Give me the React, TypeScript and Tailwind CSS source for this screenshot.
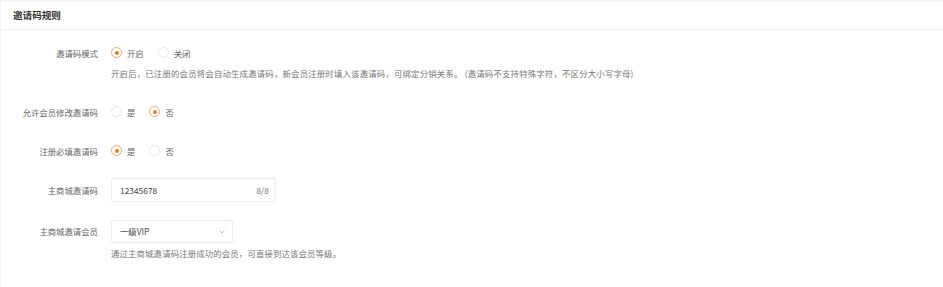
import React from 'react';

// ── Radio option ──
const Radio = ({ label, checked }: { label: string; checked?: boolean }) => (
  <div className="flex items-center gap-[5px]">
    <span
      className={`flex h-[11px] w-[11px] items-center justify-center rounded-full border ${
        checked ? 'border-[#e8ac74]' : 'border-[#e8e8e8]'
      }`}
    >
      {checked && <span className="h-[4px] w-[4px] rounded-full bg-[#d9822f]" />}
    </span>
    <span className="text-[#666]">{label}</span>
  </div>
);

const RadioGroup = ({ options, value }: { options: string[]; value: string }) => (
  <div className="flex h-[20px] items-center gap-[14px]">
    {options.map((o) => (
      <Radio key={o} label={o} checked={o === value} />
    ))}
  </div>
);

// ── Form row ──
const Row = ({
  label,
  height,
  className,
  children,
}: {
  label: string;
  height: string;
  className?: string;
  children: React.ReactNode;
}) => (
  <div className={`flex items-start ${className || ''}`}>
    <div className={`w-[97px] shrink-0 text-right text-[#666] ${height}`}>{label}</div>
    <div className="ml-[13px]">{children}</div>
  </div>
);

export default function App() {
  return (
    <div
      className="h-[287px] w-[943px] bg-white text-[8.4px] border-t-2 border-[#f2f3f7]"
      style={{ fontFamily: '"Noto Sans CJK SC", "Noto Sans", sans-serif' }}
    >
      <div className="h-[285px] border-l border-[#f3f3f3]">
        {/* ── Header ── */}
        <div className="flex h-[28px] items-center border-b border-[#f3f3f3] pl-[12px]">
          <h3 className="text-[9.6px] font-semibold text-[#333]">邀请码规则</h3>
        </div>

        {/* ── Form ── */}
        <div className="pt-[13px]">
          <Row label="邀请码模式" height="leading-[20px]">
            <RadioGroup options={['开启', '关闭']} value="开启" />
            <p className="whitespace-pre leading-[20px] tracking-[0.2px] text-[#777]">
              开启后，已注册的会员将会自动生成邀请码，新会员注册时填入该邀请码，可绑定分销关系。 (邀请码不支持特殊字符，不区分大小写字母)
            </p>
          </Row>

          <Row label="允许会员修改邀请码" height="leading-[20px]" className="mt-[19px]">
            <RadioGroup options={['是', '否']} value="否" />
          </Row>

          <Row label="注册必填邀请码" height="leading-[20px]" className="mt-[19px]">
            <RadioGroup options={['是', '否']} value="是" />
          </Row>

          <Row label="主商城邀请码" height="leading-[24px]" className="mt-[17px]">
            <div className="flex h-[24px] w-[165px] items-center justify-between rounded-[2px] border border-[#eeeeee] pl-[8px] pr-[6px]">
              <span className="text-[#444]">12345678</span>
              <span className="text-[#777]">8/8</span>
            </div>
          </Row>

          <Row label="主商城邀请会员" height="leading-[23px]" className="mt-[18px]">
            <div className="flex h-[23px] w-[122px] items-center justify-between rounded-[2px] border border-[#eeeeee] pl-[8px] pr-[7px]">
              <span className="text-[#444]">一级VIP</span>
              <svg width="6" height="4" viewBox="0 0 6 4" fill="none">
                <path d="M0.5 0.5L3 3L5.5 0.5" stroke="#b5b5b5" strokeWidth="0.8" />
              </svg>
            </div>
            <p className="leading-[20px] tracking-[0.15px] text-[#777]">通过主商城邀请码注册成功的会员，可直接到达该会员等级。</p>
          </Row>
        </div>
      </div>
    </div>
  );
}
